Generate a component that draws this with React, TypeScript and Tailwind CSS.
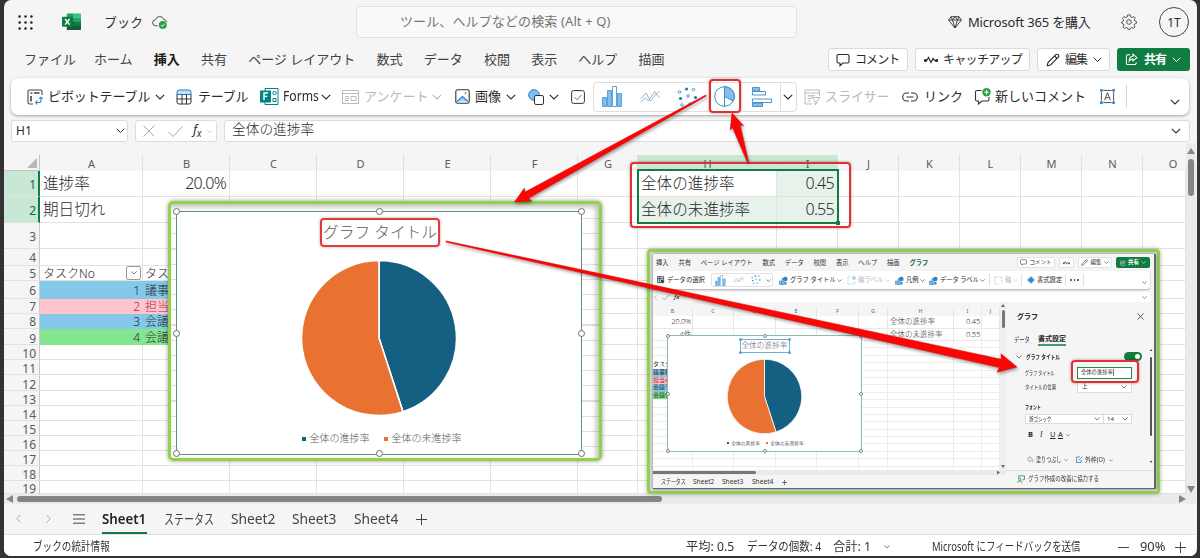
import React from 'react';
import clsx from 'clsx';

const COLS = ['A', 'B', 'C', 'D', 'E', 'F', 'G', 'H', 'I', 'J', 'K', 'L', 'M', 'N', 'O'];
const ROWS = Array.from({ length: 19 }, (_, i) => i + 1);

interface Cell {
  text: string;
  cls?: string;
}

const BIG = 'text-[15.6px] font-light';
const NUM = 'text-[16px] font-light tracking-[-.7px] justify-end pr-[3px] pb-px';
const SMALL = 'text-[12px] font-light pt-px';

const CELLS: Record<string, Cell> = {
  A1: { text: '進捗率', cls: `${BIG} pl-[3px]` },
  B1: { text: '20.0%', cls: NUM },
  A2: { text: '期日切れ', cls: `${BIG} pl-[3px]` },
  H1: { text: '全体の進捗率', cls: `${BIG} pl-[3px]` },
  I1: { text: '0.45', cls: `${NUM} bg-[#e6f2ea]` },
  H2: { text: '全体の未進捗率', cls: `${BIG} pl-[3px] bg-[#e6f2ea]` },
  I2: { text: '0.55', cls: `${NUM} bg-[#e6f2ea]` },
  A5: { text: 'タスクNo', cls: `${SMALL} pl-[3px]` },
  B5: { text: 'タスク', cls: `${SMALL} pl-[2px]` },
  A6: { text: '1', cls: `${SMALL} justify-end pr-[3px] bg-[#84c8ea]` },
  B6: { text: '議事録', cls: `${SMALL} pl-[2px] bg-[#84c8ea]` },
  A7: { text: '2', cls: `${SMALL} justify-end pr-[3px] bg-[#ffc5cf] text-[#b0283c]` },
  B7: { text: '担当者', cls: `${SMALL} pl-[2px] bg-[#ffc5cf] text-[#b0283c]` },
  A8: { text: '3', cls: `${SMALL} justify-end pr-[3px] bg-[#84c8ea]` },
  B8: { text: '会議予', cls: `${SMALL} pl-[2px] bg-[#84c8ea]` },
  A9: { text: '4', cls: `${SMALL} justify-end pr-[3px] bg-[#84e591]` },
  B9: { text: '会議休', cls: `${SMALL} pl-[2px] bg-[#84e591]` },
};

const Chev: React.FC<{ className?: string }> = ({ className = 'w-[10px]' }) => (
  <svg viewBox="0 0 10 6" className={clsx('shrink-0', className)} fill="none" stroke="currentColor" strokeWidth="1.1">
    <path d="M.8.8 5 5 9.2.8" />
  </svg>
);

// 45 / 55 split, starting at twelve o'clock
const PieSlices: React.FC<{ className?: string }> = ({ className }) => (
  <svg viewBox="0 0 156 156" className={className} stroke="#fff" strokeWidth="1.6">
    <path d="M78 78V.5A77.5 77.5 0 0 1 101.95 151.7Z" fill="#156082" />
    <path d="M78 78 101.95 151.7A77.5 77.5 0 1 1 78 .5Z" fill="#e97132" />
  </svg>
);

const BarIcon: React.FC<{ className?: string }> = ({ className }) => (
  <svg viewBox="0 0 21 21" className={className} stroke="#4c9ad6" fill="#83beec" strokeWidth=".9">
    <path d="M.5 11.5h4v9h-4z" />
    <path d="M5.5 4.5h4v16h-4z" />
    <path d="M10.5.5h4v20h-4z" fill="#fff" />
    <path d="M15.5 7.5h4v13h-4z" />
  </svg>
);

const LineIcon: React.FC<{ className?: string }> = ({ className }) => (
  <svg viewBox="0 0 20 12" className={className} fill="none">
    <path d="M.5 8 6 2l4.5 8L15 4l4.5-3.5" stroke="#9a9a9a" strokeWidth=".8" />
    <path d="m.5 11 5-4 3 3 6-9.5L19.5 7" stroke="#5ba6dd" strokeWidth=".8" />
  </svg>
);

const ScatterIcon: React.FC<{ className?: string }> = ({ className }) => (
  <svg viewBox="0 0 21 20" className={className} fill="none" stroke="#3a96dd" strokeWidth=".9">
    <circle cx="2.5" cy="5" r="1.3" />
    <circle cx="16.5" cy="2.5" r="1.3" />
    <circle cx="11" cy="9" r="1.3" />
    <circle cx="5" cy="18" r="1.3" />
    <circle cx="13" cy="17" r="1.3" />
    <g fill="#1f78c1" stroke="none">
      <circle cx="9.5" cy="2" r="1.6" />
      <circle cx="3.5" cy="11.5" r="1.6" />
      <circle cx="18.5" cy="10.5" r="1.6" />
    </g>
  </svg>
);

const CommentIcon: React.FC<{ className?: string }> = ({ className }) => (
  <svg viewBox="0 0 14 14" className={className} fill="none" stroke="currentColor" strokeWidth="1.1">
    <path d="M2.5 1.5h9a1.5 1.5 0 0 1 1.5 1.5v5.5a1.5 1.5 0 0 1-1.5 1.5H7L4 12.7V10H2.5A1.5 1.5 0 0 1 1 8.5V3a1.5 1.5 0 0 1 1.5-1.5Z" />
  </svg>
);

const CatchIcon: React.FC<{ className?: string }> = ({ className }) => (
  <svg viewBox="0 0 14 8" className={className} fill="none" stroke="currentColor" strokeWidth="1.2">
    <path d="M1.5 4.5h1.2L4.5 1.5l2.5 5 2-4 1.5 2h2" />
    <circle cx="1.5" cy="4.5" r="1" fill="currentColor" />
    <circle cx="12.5" cy="4.5" r="1" fill="currentColor" />
  </svg>
);

const PencilIcon: React.FC<{ className?: string }> = ({ className }) => (
  <svg viewBox="0 0 14 14" className={className} fill="none" stroke="currentColor" strokeWidth="1.1">
    <path d="M1.2 12.8 2 9.5l7.8-7.8a1.5 1.5 0 0 1 2.5 2.5L4.5 12z" />
    <path d="m8.5 3 2.5 2.5" />
  </svg>
);

const ShareIcon: React.FC<{ className?: string }> = ({ className }) => (
  <svg viewBox="0 0 14 14" className={className} fill="none" stroke="currentColor" strokeWidth="1.1">
    <path d="M5.5 2H3a1.5 1.5 0 0 0-1.5 1.5V11A1.5 1.5 0 0 0 3 12.5h7.5A1.5 1.5 0 0 0 12 11v-1" />
    <path d="M8.5 1.2 12.8 5 8.5 8.5V6.5c-2 0-3 .7-4 2.3 0-3 1.5-5 4-5.3z" />
  </svg>
);

// blue chart glyph used by the chart element commands
const ElementIcon: React.FC<{ className?: string }> = ({ className }) => (
  <svg viewBox="0 0 9 9" className={className}>
    <path d="M.5 5h2v3.5h-2zM3 2.5h2.2v6H3z" fill="#8cc5ee" stroke="#2f80c4" strokeWidth=".6" />
    <circle cx="6.3" cy="3" r="2.3" fill="#2f80c4" />
    <path d="M5.5 6h2v2.5h-2z" fill="#2f80c4" />
  </svg>
);

const BucketIcon: React.FC<{ className?: string }> = ({ className }) => (
  <svg viewBox="0 0 9 9" className={className}>
    <path d="M3.5 1 7 4.3 4 7.3.8 4.2z" fill="none" stroke="#444" strokeWidth=".7" />
    <path d="M7.5 5.5c1 1.5.6 2.2 0 2.2s-1-.7 0-2.2z" fill="#2f80c4" />
  </svg>
);

interface ArrowProps {
  from: [number, number];
  to: [number, number];
  tail: number;
  neck: number;
  head: number;
  length: number;
}

const Arrow: React.FC<ArrowProps> = ({ from, to, tail, neck, head, length }) => {
  const dx = to[0] - from[0];
  const dy = to[1] - from[1];
  const len = Math.hypot(dx, dy);
  const ux = dx / len;
  const uy = dy / len;
  const at = (along: number, side: number) =>
    `${(from[0] + ux * along - uy * side).toFixed(1)},${(from[1] + uy * along + ux * side).toFixed(1)}`;
  const points = [
    at(0, -tail), at(len - length, -neck), at(len - length - 1.5, -head), at(len, 0),
    at(len - length - 1.5, head), at(len - length, neck), at(0, tail),
  ].join(' ');
  return <polygon points={points} fill="#fb0505" stroke="#d80000" strokeWidth=".5" />;
};

const Handle: React.FC<{ className: string }> = ({ className }) => (
  <i className={clsx('absolute size-[7px] rounded-full border-[1.5px] border-[#6e6e6e] bg-white', className)} />
);

const TinyHandle: React.FC<{ className: string }> = ({ className }) => (
  <i className={clsx('absolute size-[4px] rounded-full border border-[#7a8a84] bg-white', className)} />
);

const TitleBar: React.FC = () => (
  <header className="flex h-[44px] shrink-0 items-center">
    <svg viewBox="0 0 15 15" className="ml-[14px] w-[15px]" fill="#222">
      {[1.6, 7.5, 13.4].map((y) => [1.6, 7.5, 13.4].map((x) => <circle key={`${x}-${y}`} cx={x} cy={y} r="1.25" />))}
    </svg>
    <svg viewBox="0 0 20 18" className="ml-[29px] w-[19px]">
      <path d="M5 1.5A1 1 0 0 1 6 .5h6.5V5H5z" fill="#21a366" />
      <path d="M12.5.5H19a1 1 0 0 1 1 1V5h-7.5z" fill="#33c481" />
      <path d="M5 5h7.5v4.5H5z" fill="#107c41" />
      <path d="M12.5 5H20v4.5h-7.5z" fill="#21a366" />
      <path d="M5 9.5h15V17a1 1 0 0 1-1 1H6a1 1 0 0 1-1-1z" fill="#185c37" />
      <path d="M12.5 9.5H20v4.2h-7.5z" fill="#107c41" />
      <rect y="4" width="11.5" height="10.5" rx="1" fill="#107c41" />
      <path d="m3.3 6.3 4.7 6M8 6.3l-4.7 6" stroke="#fff" strokeWidth="1.5" />
    </svg>
    <span className="ml-[23px] w-[48px] pt-px text-[13px]">ブック</span>
    <svg viewBox="0 0 17 15" className="w-[16px]" fill="none" stroke="#444">
      <path d="M6 11.5H4a3.2 3.2 0 0 1-.3-6.4A4.6 4.6 0 0 1 12.6 5c1.5 0 3 1 3.2 2.6" />
      <circle cx="11.5" cy="10.5" r="4.2" fill="#2e9f48" stroke="none" />
      <path d="m9.5 10.6 1.5 1.5 2.6-2.8" stroke="#fff" />
    </svg>
    <div className="ml-[188px] flex h-[32px] w-[441px] items-center rounded-[4px] border border-[#e2e2e2] bg-[#f9f9f9] pl-[43px] text-[13px] tracking-[.12px] text-[#747474]">
      ツール、ヘルプなどの検索 (Alt + Q)
    </div>
    <svg viewBox="0 0 14 13" className="ml-[151px] w-[14px]" fill="none" stroke="#333" strokeWidth=".9">
      <path d="M3 .7h8L13.4 4 7 12 .6 4zM.6 4h12.8M3 .7 4.5 4 7 12 9.5 4 11 .7M7 .7 4.5 4M7 .7 9.5 4" />
    </svg>
    <span className="ml-[6px] w-[140px] pt-px text-[13px] tracking-[-.18px] whitespace-nowrap">Microsoft 365 を購入</span>
    <svg viewBox="0 0 16 16" className="ml-[13px] w-[16px]" fill="none" stroke="#444" strokeWidth=".9">
      <circle cx="8" cy="8" r="2.3" />
      <path d="m6.7.9-.4 2-1.5.7-1.9-1.1L1.300 4.400l1.300 1.500L2.100 7.400.6 8v1.300l1.800.7.5 1.200-1 1.800 1.500 1.400 1.800-.9 1.300.5.6 1.500h1.800l.6-1.500 1.300-.5 1.800.9 1.500-1.400-1-1.800.5-1.200 1.800-.7V7.500L13.800 7l-.5-1.300 1-1.700-1.400-1.500-1.700 1-1.500-.6-.5-2z" />
    </svg>
    <div className="ml-[22px] flex size-[30px] items-center justify-center rounded-full border border-[#444] pt-px text-[12px]">1T</div>
  </header>
);

const TABS = ['ホーム', '挿入', '共有', 'ページ レイアウト', '数式', 'データ', '校閲', '表示', 'ヘルプ', '描画'];
const CMD = 'flex h-[23px] items-center rounded-[3px] border border-[#dadada] bg-white text-[12px] whitespace-nowrap';

const TabStrip: React.FC = () => (
  <nav className="flex h-[34px] shrink-0 items-start pl-[20px] text-[13px] leading-[20px] text-[#424242]">
    <span className="w-[70px] pt-[5px]">ファイル</span>
    <ul className="flex gap-[21.2px] pt-[5px]">
      {TABS.map((tab) => (
        <li key={tab} className={clsx('whitespace-nowrap', tab === '挿入' && 'font-bold text-[#1b1b1b]')}>{tab}</li>
      ))}
    </ul>
    <div className="ml-auto flex gap-[7px] pt-[4px] pr-[6px] text-[#2b2b2b]">
      <div className={`${CMD} w-[80px] pl-[7px]`}><CommentIcon className="mr-[5px] w-[14px]" /><span className="tracking-[-.9px]">コメント</span></div>
      <div className={`${CMD} w-[115px] pl-[8px]`}><CatchIcon className="mr-[5px] w-[14px]" /><span className="tracking-[-.7px]">キャッチアップ</span></div>
      <div className={`${CMD} w-[73px] pl-[8px]`}><PencilIcon className="mr-[5px] w-[14px]" /><span className="tracking-[-.9px]">編集</span><Chev className="ml-[6px] w-[9px]" /></div>
      <div className="flex h-[23px] w-[73px] items-center rounded-[3px] bg-[#107c41] pl-[8px] text-[12px] font-bold text-white">
        <ShareIcon className="mr-[6px] w-[13px]" /><span className="tracking-[-.9px]">共有</span><Chev className="ml-[6px] w-[9px]" />
      </div>
    </div>
  </nav>
);

const Ribbon: React.FC = () => (
  <div className="mx-[7px] flex h-[37px] shrink-0 items-center rounded-[7px] bg-white pl-[16px] text-[13px] whitespace-nowrap text-[#2b2b2b] shadow-[0_1px_3px_rgba(0,0,0,.35)]">
    <div className="flex w-[149px] items-center">
      <svg viewBox="0 0 16 16" className="mr-[5px] w-[16px]" fill="none" stroke="#444" strokeWidth="1.1">
        <path d="M15 6V2.5A1.5 1.5 0 0 0 13.5 1h-11A1.5 1.5 0 0 0 1 2.5v11A1.5 1.5 0 0 0 2.5 15H6" />
        <path d="M3.5 4h2M7 4h5.5M4 7v5.5" strokeWidth="1.6" />
        <path d="M8.5 13.5h3.5a2 2 0 0 0 2-2V8M8.5 13.5l1.8-1.8M8.5 13.5l1.8 1.8M14 8l-1.8 1.8M14 8l1.5 1.8" stroke="#2b88d8" />
      </svg>
      <span className="w-[107px] tracking-[-.1px]">ピボットテーブル</span><Chev />
    </div>
    <div className="flex w-[84px] items-center">
      <svg viewBox="0 0 16 16" className="mr-[6px] w-[16px]" fill="none" stroke="#333">
        <path d="M1 3A2 2 0 0 1 3 1h10a2 2 0 0 1 2 2v2.5H1z" fill="#bfe0f7" stroke="#2b7cc0" />
        <path d="M1 5.5V13a2 2 0 0 0 2 2h10a2 2 0 0 0 2-2V5.5M1 10h14M6 5.5V15M10.5 5.5V15" />
      </svg>
      <span className="tracking-[-.2px]">テーブル</span>
    </div>
    <div className="flex w-[82px] items-center">
      <svg viewBox="0 0 19 17" className="mr-[4px] w-[19px]">
        <path d="M5 .5h13v16H5z" fill="#fff" stroke="#038387" />
        <rect y="2.5" width="11" height="12" fill="#038387" />
        <path d="M4 12V5h4M4 8.4h3.4" stroke="#fff" strokeWidth="1.4" fill="none" />
        <circle cx="14.5" cy="5" r="1.7" fill="none" stroke="#038387" />
        <path d="M13 10.5h3v3h-3z" fill="none" stroke="#038387" />
      </svg>
      <span className="w-[38px]"><span className="inline-block origin-left scale-x-[.9] text-[13.5px]">Forms</span></span><Chev />
    </div>
    <div className="flex w-[113px] items-center text-[#b9b9b9]">
      <svg viewBox="0 0 17 14" className="mr-[5px] w-[17px]" fill="none" stroke="currentColor">
        <path d="M.5.5h16v13H.5zM.5 3.5h16M3 6.5h4M3 8.5h4M3 10.5h4M9 6.5h5v4H9z" />
      </svg>
      <span className="w-[68px]">アンケート</span><Chev />
    </div>
    <div className="flex w-[73px] items-center">
      <svg viewBox="0 0 15 15" className="mr-[5px] w-[15px]" fill="none" stroke="#333" strokeWidth="1.1">
        <path d="m2 12.5 5.5-5 5.5 5" fill="#9fd0f3" stroke="#2b7cc0" />
        <rect x=".8" y=".8" width="13.4" height="13.4" rx="1.8" />
        <circle cx="10.5" cy="4.2" r="1" fill="#e07b20" stroke="none" />
      </svg>
      <span className="w-[31px]">画像</span><Chev />
    </div>
    <div className="flex w-[43px] items-center">
      <svg viewBox="0 0 16 16" className="mr-[5px] w-[16px]" stroke="#333">
        <circle cx="6" cy="6" r="5.3" fill="#83beec" stroke="#2b7cc0" />
        <rect x="6.5" y="6.5" width="9" height="9" rx="1.5" fill="#fff" />
      </svg>
      <Chev />
    </div>
    <svg viewBox="0 0 14 14" className="mr-[8px] w-[14px]" fill="none" stroke="#333">
      <rect x=".6" y=".6" width="12.8" height="12.8" rx="2" /><path d="M3.5 7.3 6 9.8l4.5-5" stroke="#2e9f48" />
    </svg>
    <div className="flex h-[30px] w-[204px] items-center rounded-[4px] border border-[#dedede] pl-[8px]">
      <BarIcon className="mr-[17px] w-[21px]" />
      <LineIcon className="mr-[17px] w-[20px]" />
      <ScatterIcon className="mr-[16px] w-[21px]" />
      <svg viewBox="0 0 21 21" className="mr-[17px] w-[21px]" fill="none" stroke="#3a8bcb">
        <circle cx="10.5" cy="10.5" r="9.8" />
        <path d="M10.5 10.5V.7a9.8 9.8 0 0 1 8.8 14.2z" fill="#83beec" /><path d="M10.5 10.5v9.8" />
      </svg>
      <svg viewBox="0 0 20 20" className="w-[20px]" fill="#83beec" stroke="#3a8bcb" strokeWidth=".9">
        <path d="M.5 12h19v3.5H.5z" fill="#fff" />
        <path d="M.5.5h7V4h-7z" /><path d="M.5 4.5h13V8H.5z" fill="#fff" /><path d="M.5 16h10v3.5H.5z" />
      </svg>
      <div className="ml-[8px] flex h-full items-center border-l border-[#dedede] pl-[2px]"><Chev /></div>
    </div>
    <div className="ml-[7px] flex w-[98px] items-center text-[#b9b9b9]">
      <svg viewBox="0 0 17 16" className="mr-[4px] w-[17px]" fill="none" stroke="currentColor">
        <path d="M15.5 7V1H1v14h7M1 4h14.5M3.5 7h6M3.5 9.5h4M3.5 12h3" />
        <path d="M8 8.5h8l-3 3.5v2.5l-2 1V12z" /><path d="M4 6.5h7" stroke="#9fd0f3" />
      </svg>
      <span className="tracking-[-.1px]">スライサー</span>
    </div>
    <div className="flex w-[72px] items-center">
      <svg viewBox="0 0 16 10" className="mr-[6px] w-[16px]" fill="none" stroke="#333" strokeWidth="1.1">
        <path d="M7 1H4.7a4 4 0 0 0 0 8H7M9 1h2.3a4 4 0 0 1 0 8H9M4.5 5h7" />
      </svg>
      リンク
    </div>
    <div className="flex w-[126px] items-center">
      <svg viewBox="0 0 17 17" className="mr-[4px] w-[17px]" fill="none" stroke="#333" strokeWidth="1.1">
        <path d="M7.5 2.5H3A1.5 1.5 0 0 0 1.5 4v7.5A1.5 1.5 0 0 0 3 13h1.5v3L8 13h5.5a1.5 1.5 0 0 0 1.5-1.5V9" />
        <circle cx="12.5" cy="4.2" r="4.2" fill="#2e9f48" stroke="none" /><path d="M12.5 2v4.4M10.3 4.2h4.4" stroke="#fff" />
      </svg>
      新しいコメント
    </div>
    <svg viewBox="0 0 16 16" className="w-[15px]" fill="none" stroke="#444">
      <path d="M3.5 1.5h9M3.5 14.5h9M1.5 3.5v9M14.5 3.5v9M4.8 12 8 4l3.2 8M6 9.3h4" />
      <path d="M.1.1h2.800v2.800H.1zM13.100.1h2.800v2.800h-2.800zM.1 13.100h2.800v2.800H.1zM13.100 13.100h2.800v2.800h-2.800z" fill="#2b88d8" stroke="none" />
    </svg>
    <i className="ml-[11px] h-[23px] w-px bg-[#d5d5d5]" />
    <Chev className="mt-[11px] ml-[43px] w-[10px]" />
  </div>
);

const FormulaBar: React.FC = () => (
  <div className="mr-[6px] mb-[13px] ml-[7px] mt-[5px] flex h-[22px] shrink-0 gap-[7px]">
    <div className="flex w-[117px] items-center justify-between rounded-[3px] border border-[#dcdcdc] bg-white pr-[2px] pl-[4px] text-[12px]">
      H1<Chev className="w-[9px]" />
    </div>
    <div className="flex w-[82px] items-center rounded-[3px] border border-[#dcdcdc] bg-white pl-[7px] text-[#a8a8a8]">
      <svg viewBox="0 0 12 12" className="w-[12px]" stroke="currentColor"><path d="m.5.5 11 11M11.5.5l-11 11" /></svg>
      <svg viewBox="0 0 15 11" className="ml-[13px] w-[15px]" fill="none" stroke="currentColor"><path d="m.5 6 4.5 4.500L14.500.5" /></svg>
      <span className="-mt-[2px] ml-[10px] w-[14px] text-[13px] tracking-[-.5px] text-[#333] italic">f<sub className="text-[10px]">x</sub></span>
      <Chev className="w-[5px]" />
    </div>
    <div className="flex flex-1 items-center justify-between rounded-[3px] border border-[#dcdcdc] bg-white pr-[8px] pl-[7px] text-[13.7px] font-light">
      <span className="-mt-[3px]">全体の進捗率</span><Chev />
    </div>
  </div>
);

const Grid: React.FC = () => (
  <div className="flex h-[339px] shrink-0">
    <div className="grid h-[339px] w-[1182px] shrink-0 grid-cols-[36px_103px_87px_87px_87px_87px_87px_60px_139px_61px_61px_61px_61px_61px_61px_43px] grid-rows-[16px_26px_26px_26px_17px_15px_18px_15px_15px_16px_15px_15px_16px_15px_15px_15px_15px_15px_15px_13px] overflow-hidden bg-white">
      <div className="flex items-end justify-end border-r border-b border-[#c4c4c4] bg-[#f5f5f5] p-[2px]">
        <i className="size-[10px] bg-[#b8b8b8] [clip-path:polygon(100%_0,100%_100%,0_100%)]" />
      </div>
      {COLS.map((c) => (
        <div
          key={c}
          className={clsx(
            'flex items-center justify-center text-[11px] leading-none text-[#5a5a5a]',
            c === 'H' || c === 'I' ? 'bg-[#c8e8d5] text-[#0e5c31]' : 'bg-[#f5f5f5]',
            c === 'O' ? 'pl-[17px]' : 'border-r border-[#e0e0e0] pl-px',
          )}
        >
          {c}
        </div>
      ))}
      {ROWS.map((r) => (
        <React.Fragment key={r}>
          <div
            className={clsx(
              'flex items-center justify-end border-b border-[#e2e2e2] text-[12px] leading-none',
              r < 3 ? 'border-r-2 border-r-[#107c41] bg-[#c8e8d5] pr-[2px] text-[#0e6b39]' : 'border-r border-r-[#c9c9c9] bg-[#f5f5f5] pr-[3px] text-[#5a5a5a]',
              r < 9 ? 'pt-[2px]' : 'pt-[4px]',
            )}
          >
            {r}
          </div>
          {COLS.map((c) => {
            const cell = CELLS[`${c}${r}`];
            return (
              <div
                key={c}
                className={clsx(
                  'relative flex items-center overflow-hidden leading-none whitespace-nowrap',
                  r > 5 && r < 10 && c < 'C' ? '' : 'border-r border-b border-[#e2e2e2]',
                  cell?.cls,
                )}
              >
                {cell?.text}
                {c === 'A' && r === 5 && (
                  <span className="absolute right-px bottom-0 flex h-[14px] w-[15px] items-center justify-center rounded-[2px] border border-[#9a9a9a] bg-white">
                    <Chev className="w-[6px]" />
                  </span>
                )}
              </div>
            );
          })}
        </React.Fragment>
      ))}
    </div>
    <div className="-mt-[12px] flex h-[351px] w-[10px] flex-col items-center bg-[#ebebeb] pt-[5px] pb-px">
      <i className="h-[6px] w-[8px] bg-[#858585] [clip-path:polygon(50%_0,100%_100%,0_100%)]" />
      <i className="mt-[5px] h-[37px] w-[6px] rounded-full bg-[#858585]" />
      <i className="mt-auto h-[7px] w-[8px] bg-[#858585] [clip-path:polygon(0_0,100%_0,50%_100%)]" />
    </div>
  </div>
);

const SheetTabs: React.FC = () => (
  <>
    <div className="flex h-[10px] shrink-0 items-center bg-[#ebebeb] px-[2px]">
      <i className="h-[8px] w-[7px] bg-[#858585] [clip-path:polygon(0_50%,100%_0,100%_100%)]" />
      <i className="ml-[4px] h-[6px] w-[645px] rounded-full bg-[#858585]" />
      <i className="mr-[8px] ml-auto h-[8px] w-[7px] bg-[#858585] [clip-path:polygon(100%_50%,0_0,0_100%)]" />
    </div>
    <div className="flex h-[31px] shrink-0 items-center border-b border-[#e0e0e0] text-[13.5px] whitespace-nowrap text-[#444]">
      <Chev className="ml-[10px] w-[9px] rotate-90 text-[#aaa]" />
      <Chev className="ml-[21px] w-[9px] -rotate-90 text-[#aaa]" />
      <svg viewBox="0 0 12 10" className="ml-[20px] w-[12px]" stroke="#444"><path d="M0 .8h12M0 5h12M0 9.2h12" /></svg>
      <span className="relative ml-[17px] flex h-full w-[62px] items-center font-semibold text-[#222]">
        <span className="inline-block origin-left scale-x-[.98]">Sheet1</span>
        <i className="absolute bottom-0 left-0 h-[2px] w-[45px] bg-[#107c41]" />
      </span>
      <span className="w-[67px]"><span className="inline-block origin-left scale-x-[.74]">ステータス</span></span>
      <span className="w-[61px]"><span className="inline-block origin-left scale-x-[1.02]">Sheet2</span></span>
      <span className="w-[62px]"><span className="inline-block origin-left scale-x-[1.02]">Sheet3</span></span>
      <span className="w-[62px]"><span className="inline-block origin-left scale-x-[1.02]">Sheet4</span></span>
      <svg viewBox="0 0 11 11" className="w-[11px]" stroke="#444"><path d="M5.5 0v11M0 5.5h11" /></svg>
    </div>
  </>
);

const StatusBar: React.FC = () => (
  <footer className="flex h-[21px] shrink-0 items-center bg-white pt-[3px] text-[12px] leading-none whitespace-nowrap text-[#333]">
    <span className="ml-[29px] w-[653px]"><span className="inline-block origin-left scale-x-[.8]">ブックの統計情報</span></span>
    <span className="w-[61px]"><span className="inline-block origin-left scale-x-[1.02]">平均: 0.5</span></span>
    <span className="w-[86px]"><span className="inline-block origin-left scale-x-[.87]">データの個数: 4</span></span>
    <span className="w-[51px]"><span className="inline-block origin-left scale-x-[1.02]">合計: 1</span></span>
    <Chev className="w-[6px]" />
    <span className="ml-[42px] w-[186px]"><span className="inline-block origin-left scale-x-[.79]">Microsoft にフィードバックを送信</span></span>
    <i className="h-px w-[11px] bg-[#444]" />
    <span className="ml-[11px] w-[35px]"><span className="inline-block origin-left scale-x-[1.07]">90%</span></span>
    <svg viewBox="0 0 11 11" className="w-[11px]" stroke="#444"><path d="M5.5 0v11M0 5.5h11" /></svg>
  </footer>
);

const Chart: React.FC = () => (
  <div className="absolute top-[201px] left-[168px] h-[260px] w-[434px] rounded-[5px] border-[3px] border-[#92d050] bg-[repeating-linear-gradient(#fff_0_14px,#e0e0e0_14px_15.2px)] pt-[7px] pl-[5px] shadow-[0_0_4px_rgba(0,0,0,.4),inset_-3px_3px_5px_rgba(0,0,0,.25)]">
    <div className="relative flex h-[244px] w-[406px] flex-col items-center border border-[#5d8f7b] bg-white text-[#595959]">
      <div className="mt-[6px] ml-[2px] flex h-[29px] w-[120px] items-center justify-center rounded-[4px] border-2 border-[#e23a3a] text-[15.7px] font-light shadow-[0_0_3px_rgba(0,0,0,.35)]">
        グラフ タイトル
      </div>
      <PieSlices className="mt-[13px] w-[156px]" />
      <div className="mt-[15px] ml-[5px] flex items-center text-[10px] leading-[15px] font-light">
        <i className="mr-[4px] size-[4px] bg-[#156082]" /><span className="w-[74px]">全体の進捗率</span>
        <i className="mr-[4px] size-[4px] bg-[#e97132]" /><span>全体の未進捗率</span>
      </div>
      <Handle className="-top-[4px] -left-[4px]" />
      <Handle className="-top-[4px] left-[199px]" />
      <Handle className="-top-[4px] -right-[4px]" />
      <Handle className="top-[118px] -left-[4px]" />
      <Handle className="top-[118px] -right-[4px]" />
      <Handle className="-bottom-[3px] -left-[4px]" />
      <Handle className="-bottom-[3px] left-[199px]" />
      <Handle className="-right-[4px] -bottom-[3px]" />
    </div>
  </div>
);

const MINI_TABS = ['挿入', '共有', 'ページ レイアウト', '数式', 'データ', '校閲', '表示', 'ヘルプ', '描画', 'グラフ'];
const MINI_BTN = 'flex h-[11px] items-center justify-center gap-[2px] rounded-[2px] border border-[#e2e2e2] bg-white';
const MINI_TASKS = [
  { text: '議事録', cls: 'bg-[#84c8ea]' },
  { text: '担当者', cls: 'bg-[#ffc5cf] text-[#b0283c]' },
  { text: '会議予', cls: 'bg-[#84c8ea]' },
  { text: '会議休', cls: 'bg-[#84e591]' },
];

const MiniRibbon: React.FC = () => (
  <>
    <div className="flex h-[17px] shrink-0 items-center pr-[4px] pl-[3px] text-[6.3px]">
      <div className="flex gap-[9.8px] text-[#333]">
        {MINI_TABS.map((t) => <span key={t} className={clsx(t === 'グラフ' && 'font-bold text-[#0e7039]')}>{t}</span>)}
      </div>
      <div className="ml-auto flex gap-[4px]">
        <div className={`${MINI_BTN} w-[38px] text-[5.5px]`}><CommentIcon className="w-[7px]" />コメント</div>
        <div className={`${MINI_BTN} w-[15px]`}><CatchIcon className="w-[7px]" /></div>
        <div className={`${MINI_BTN} w-[34px] text-[5.5px]`}><PencilIcon className="w-[7px]" />編集<Chev className="w-[5px]" /></div>
        <div className="flex h-[11px] w-[34px] items-center justify-center gap-[2px] rounded-[2px] bg-[#107c41] text-[5.5px] font-bold text-white">
          <ShareIcon className="w-[6px]" />共有<Chev className="w-[5px]" />
        </div>
      </div>
    </div>
    <div className="mr-[4px] flex h-[18px] shrink-0 items-center rounded-r-[3px] bg-white pl-[4px] text-[6.3px] text-[#222] shadow-[0_1px_2px_rgba(0,0,0,.3)]">
      <svg viewBox="0 0 9 9" className="mr-[2px] w-[8px]"><path d="M.5.5h7v7h-7zM.5 3h7M3 .5v7" fill="#bcdcf5" stroke="#333" strokeWidth=".8" /><path d="m4 4 4.5 2-2 .5-.5 2z" fill="#111" /></svg>
      <span className="w-[44px]">データの選択</span>
      <div className="flex h-[14px] w-[62px] items-center rounded-[2px] border border-[#e2e2e2] pl-[3px]">
        <BarIcon className="mr-[8px] w-[11px]" /><LineIcon className="mr-[7px] w-[10px]" /><ScatterIcon className="mr-[5px] w-[10px]" /><Chev className="w-[5px]" />
      </div>
      <ElementIcon className="mr-[2px] ml-[6px] w-[9px]" /><span className="w-[47px]">グラフ タイトル</span><Chev className="w-[5px]" />
      <span className="ml-[5px] flex w-[48px] items-center text-[#b5b5b5]">
        <svg viewBox="0 0 9 9" className="mr-[2px] w-[9px]" fill="none" stroke="#9cc8e8" strokeWidth=".8"><path d="M1 1v7h7V5M1 1h3" strokeDasharray="1.5 1" /><circle cx="7" cy="2" r="1.5" fill="#bcdcf5" /></svg>
        <span className="w-[27px]">軸ラベル</span><Chev className="w-[5px]" />
      </span>
      <ElementIcon className="mr-[2px] w-[9px]" /><span className="w-[14px]">凡例</span><Chev className="w-[5px]" />
      <ElementIcon className="mr-[2px] ml-[4px] w-[9px]" /><span className="w-[40px] tracking-[-.1px]">データ ラベル</span><Chev className="w-[5px]" />
      <span className="ml-[4px] flex h-[12px] w-[33px] items-center border-x border-[#e0e0e0] pl-[4px] text-[#b5b5b5]">
        <svg viewBox="0 0 9 9" className="mr-[2px] w-[9px]" fill="none" stroke="#9cc8e8" strokeWidth=".8"><path d="M1 1h7v5M1 1v7h4" strokeDasharray="1.5 1" /></svg>
        軸<Chev className="ml-[2px] w-[5px]" />
      </span>
      <svg viewBox="0 0 9 9" className="mr-[2px] ml-[5px] w-[8px]"><path d="M4.5 0 9 4.5 4.5 9 0 4.5z" fill="#5ba6dd" /><path d="M4.5 2.5v4M2.5 4.5h4" stroke="#155a96" strokeWidth=".8" /></svg>
      <span className="w-[28px] whitespace-nowrap">書式設定</span>
      <span className="flex h-[12px] w-[19px] items-center justify-center gap-[2px] border-x border-[#e0e0e0]">
        <i className="size-[1.5px] rounded-full bg-[#333]" /><i className="size-[1.5px] rounded-full bg-[#333]" /><i className="size-[1.5px] rounded-full bg-[#333]" />
      </span>
      <Chev className="mt-[5px] mr-[3px] ml-auto w-[5px]" />
    </div>
    <div className="mt-[3px] mr-[4px] flex h-[10px] shrink-0 items-center text-[#9a9a9a]">
      <Chev className="w-[5px] rotate-90" />
      <svg viewBox="0 0 9 7" className="ml-[4px] w-[8px]" fill="none" stroke="currentColor"><path d="m.5 4 2.5 2.5L8.5.5" /></svg>
      <span className="ml-[4px] w-[11px] text-[6px] font-bold text-[#555] italic">fx</span>
      <div className="flex h-full flex-1 items-center justify-end rounded-[2px] bg-white pr-[3px] text-[#333]"><Chev className="w-[5px]" /></div>
    </div>
  </>
);

const MiniChart: React.FC = () => (
  <div className="absolute top-[18px] left-[14px] flex h-[117px] w-[195px] flex-col items-center border border-[#8fbca9] bg-white text-[#666]">
    <div className="relative mt-[3px] flex h-[14px] w-[50px] items-center justify-center border border-[#6aaede] text-[7.7px] font-light">
      全体の進捗率
      <i className="absolute -top-[2px] -left-[2px] size-[3px] rounded-full bg-[#5b9fd4]" />
      <i className="absolute -top-[2px] -right-[2px] size-[3px] rounded-full bg-[#5b9fd4]" />
      <i className="absolute -bottom-[2px] -left-[2px] size-[3px] rounded-full bg-[#5b9fd4]" />
      <i className="absolute -right-[2px] -bottom-[2px] size-[3px] rounded-full bg-[#5b9fd4]" />
    </div>
    <PieSlices className="mt-[6px] w-[75px]" />
    <div className="mt-[5px] ml-[2px] flex items-center text-[4.8px] leading-[8px]">
      <i className="mr-[2px] size-[2px] bg-[#156082]" /><span className="w-[35px]">全体の進捗率</span>
      <i className="mr-[2px] size-[2px] bg-[#e97132]" /><span>全体の未進捗率</span>
    </div>
    <TinyHandle className="-top-[2px] -left-[2px]" />
    <TinyHandle className="-top-[2px] left-[95px]" />
    <TinyHandle className="-top-[2px] -right-[2px]" />
    <TinyHandle className="top-[56px] -left-[2px]" />
    <TinyHandle className="top-[56px] -right-[2px]" />
    <TinyHandle className="-bottom-[2px] -left-[2px]" />
    <TinyHandle className="-bottom-[2px] left-[95px]" />
    <TinyHandle className="-right-[2px] -bottom-[2px]" />
  </div>
);

const MINI_GRID = 'grid grid-cols-[40px_41px_42px_41px_42px_29px_66px_28px_18px]';

const MiniSheet: React.FC = () => (
  <div className="flex h-full w-[353px] shrink-0 flex-col">
    <div className="flex h-[168px] shrink-0">
      <div className="relative flex w-[347px] flex-col overflow-hidden bg-white">
        <div className={`${MINI_GRID} h-[14px] shrink-0 bg-[#f5f5f5] pt-[5px] text-center text-[5.5px] text-[#666]`}>
          {COLS.slice(1, 10).map((c) => <span key={c} className="border-r border-[#e6e6e6] leading-[9px]">{c}</span>)}
        </div>
        {['全体の進捗率', '全体の未進捗率'].map((label, i) => (
          <div key={label} className={`${MINI_GRID} h-[12.5px] shrink-0 text-[7.5px] leading-[11px] font-light text-[#333]`}>
            {COLS.slice(1, 10).map((c) => (
              <span key={c} className={clsx('border-r border-b border-[#e9e9e9] whitespace-nowrap', (c === 'B' || c === 'I') && 'pr-px text-right tracking-[-.2px]', c === 'H' && 'pl-[2px]')}>
                {c === 'B' && (i ? '4件' : '20.0%')}
                {c === 'H' && label}
                {c === 'I' && (i ? '0.55' : '0.45')}
              </span>
            ))}
          </div>
        ))}
        {Array.from({ length: 18 }, (_, i) => (
          <div key={i} className={`${MINI_GRID} h-[7.4px] shrink-0`}>
            {COLS.slice(1, 10).map((c) => <span key={c} className="border-r border-b border-[#ececec]" />)}
          </div>
        ))}
        <div className="absolute top-[59px] left-0 w-[16px] overflow-hidden bg-white text-[6px] leading-[7.4px] whitespace-nowrap">
          <p className="pb-[1px]">タスク</p>
          {MINI_TASKS.map((t) => <p key={t.text} className={clsx('h-[7.4px]', t.cls)}>{t.text}</p>)}
        </div>
        <div className="absolute top-[15px] left-0"><MiniChart /></div>
      </div>
      <div className="flex w-[6px] flex-col items-center bg-[#efefef] py-[2px]">
        <i className="h-[3px] w-[4px] bg-[#666] [clip-path:polygon(50%_0,100%_100%,0_100%)]" />
        <i className="mt-[3px] h-[18px] w-[3px] rounded-full bg-[#777]" />
        <i className="mt-auto h-[3px] w-[4px] bg-[#666] [clip-path:polygon(0_0,100%_0,50%_100%)]" />
      </div>
    </div>
    <div className="flex h-[5px] shrink-0 items-center justify-between bg-[#ebebeb] pr-[6px]">
      <i className="h-[3px] w-[103px] rounded-r-full bg-[#777]" />
      <i className="h-[4px] w-[3px] bg-[#666] [clip-path:polygon(100%_50%,0_0,0_100%)]" />
    </div>
    <div className="flex flex-1 items-center pt-px pl-[8px] text-[6.6px] whitespace-nowrap text-[#333]">
      <span className="w-[32px]"><span className="inline-block origin-left scale-x-[.75]">ステータス</span></span>
      <span className="w-[29px]">Sheet2</span><span className="w-[30px]">Sheet3</span><span className="w-[30px]">Sheet4</span>
      <svg viewBox="0 0 5 5" className="w-[5px]" stroke="#444" strokeWidth=".7"><path d="M2.5 0v5M0 2.5h5" /></svg>
    </div>
  </div>
);

const FormatPane: React.FC = () => (
  <aside className="relative flex flex-1 flex-col pl-[11px] text-[6px] leading-none whitespace-nowrap text-[#333]">
    <div className="mt-[8px] flex h-[14px] items-center justify-between pr-[10px] text-[7px] font-bold text-[#222]">
      グラフ
      <svg viewBox="0 0 7 7" className="w-[7px]" stroke="#333" strokeWidth=".8"><path d="m.5.5 6 6M6.5.5l-6 6" /></svg>
    </div>
    <div className="mt-[7px] flex h-[16px] text-[7px]">
      <span className="-ml-[3px] w-[24px] pt-[5px]"><span className="inline-block origin-left scale-x-[.75]">データ</span></span>
      <span className="border-b-2 border-[#3f9b6c] pt-[4px] font-bold text-[#222]">書式設定</span>
    </div>
    <div className="mt-[5px] flex h-[12px] items-center pr-[12px]">
      <Chev className="ml-[-1px] w-[6px]" />
      <span className="ml-[4px] inline-block origin-left scale-x-[.78] font-bold text-[#222]">グラフ タイトル</span>
      <span className="ml-auto flex h-[9px] w-[18px] items-center justify-end rounded-full bg-[#107c41] pr-[2px]"><i className="size-[5px] rounded-full bg-white" /></span>
    </div>
    <div className="mt-[4px] flex h-[12px] items-center pl-[8px]">
      <span className="w-[52px]"><span className="inline-block origin-left scale-x-[.68]">グラフ タイトル</span></span>
      <span className="flex h-[12px] w-[55px] items-center border border-[#1f8a50] bg-white pl-[3px] text-[5.3px]">全体の進捗率<i className="h-[7px] w-px bg-[#777]" /></span>
    </div>
    <div className="mt-[2px] flex h-[12px] items-center pl-[8px]">
      <span className="w-[52px]"><span className="inline-block origin-left scale-x-[.74]">タイトルの位置</span></span>
      <span className="flex h-[12px] w-[55px] items-center justify-between border border-[#dcdcdc] bg-white px-[4px] pt-px text-[5.5px]">上<Chev className="w-[6px]" /></span>
    </div>
    <p className="mt-[11px] ml-[8px] h-[6px] origin-left scale-x-[.66] font-bold text-[#222]">フォント</p>
    <div className="mt-[4px] flex h-[11px] pl-[8px]">
      <span className="flex w-[79px] items-center justify-between border border-[#dcdcdc] bg-white px-[3px]"><span className="inline-block origin-left scale-x-[.75]">游ゴシック</span><Chev className="w-[6px]" /></span>
      <span className="flex w-[28px] items-center justify-between border border-l-0 border-[#dcdcdc] bg-white px-[3px]">14<Chev className="w-[6px]" /></span>
    </div>
    <div className="mt-[6px] flex h-[10px] items-center pl-[11px] text-[7.5px] text-[#222]">
      <b className="w-[12px]">B</b><span className="w-[10px] font-['Liberation_Serif'] italic">I</span><span className="w-[8px] underline">U</span>
      <span className="border-b border-[#222]">A</span><Chev className="ml-[3px] w-[4px]" />
    </div>
    <div className="mt-[15px] flex h-[10px] items-center pl-[10px] text-[6.5px]">
      <BucketIcon className="mr-[2px] w-[7px]" />
      <span className="w-[28px]"><span className="inline-block origin-left scale-x-[.78]">塗りつぶし</span></span><Chev className="w-[4px]" />
      <svg viewBox="0 0 7 7" className="mr-[2px] ml-[8px] w-[7px]" fill="none" stroke="#2f80c4" strokeWidth=".8"><path d="M4 1H.5v5.5H5V4M2.5 4.5 6.5.5" /></svg>
      <span className="w-[24px]"><span className="inline-block origin-left scale-x-[.9]">外枠(O)</span></span><Chev className="w-[4px]" />
    </div>
    <div className="mt-[5px] -ml-[11px] flex h-[19px] items-center border-t border-[#e0e0e0] pl-[11px] text-[6.5px]">
      <svg viewBox="0 0 9 9" className="mr-[3px] w-[8px]" fill="none" stroke="#107c41" strokeWidth=".8"><path d="M2 3.5V1h6.5v4H7L5.5 6.5" /><circle cx="3" cy="5" r="1.3" /><path d="M.5 8.8C.5 6.5 5.5 6.5 5.5 8.8" /></svg>
      <span className="inline-block origin-left scale-x-[.84]">グラフ作成の改善に協力する</span>
    </div>
    <div className="absolute top-[47px] right-px flex h-[114px] w-[4px] flex-col items-center justify-between">
      <i className="h-[2px] w-[3px] bg-[#444] [clip-path:polygon(50%_0,100%_100%,0_100%)]" />
      <i className="mb-[20px] h-[79px] w-[2px] rounded-full bg-[#555]" />
      <i className="h-[2px] w-[3px] bg-[#444] [clip-path:polygon(0_0,100%_0,50%_100%)]" />
    </div>
  </aside>
);

const Inset: React.FC = () => (
  <div className="absolute top-[249px] left-[647px] h-[245px] w-[513px] rounded-[4px] border-[3px] border-[#92d050] bg-[#d9d9d9] pt-[2px] pl-[3px] shadow-[0_0_4px_rgba(0,0,0,.35)]">
    <div className="flex h-[235px] w-[503px] flex-col overflow-hidden border-r-2 border-b border-[#666] bg-[#f5f5f5] shadow-[0_0_3px_rgba(0,0,0,.4)]">
      <MiniRibbon />
      <div className="flex min-h-0 flex-1">
        <MiniSheet />
        <FormatPane />
      </div>
    </div>
  </div>
);

const RED = 'absolute rounded-[4px] border-2 border-[#e23030] shadow-[0_0_3px_rgba(0,0,0,.4)]';

export default function App() {
  return (
    <div className="relative h-[558px] w-[1200px] overflow-hidden bg-[#333] px-[4px] font-['Noto_Sans','Noto_Sans_CJK_JP',sans-serif] text-[#2b2b2b]">
      <div className="flex h-[556px] w-[1193px] flex-col overflow-hidden rounded-[7px] bg-[#f5f5f5] pr-px">
        <TitleBar />
        <TabStrip />
        <Ribbon />
        <FormulaBar />
        <Grid />
        <SheetTabs />
        <StatusBar />
      </div>

      {/* selected range */}
      <div className="absolute top-[169px] left-[637px] h-[55px] w-[202px] border-2 border-[#107c41]">
        <i className="absolute -right-[3px] -bottom-[3px] size-[4px] bg-[#107c41]" />
      </div>

      <Chart />
      <Inset />

      {/* annotations */}
      <div className={`${RED} top-[79px] left-[709px] h-[34px] w-[32px]`} />
      <div className={`${RED} top-[162px] left-[630px] h-[66px] w-[221px]`} />
      <div className={`${RED} top-[360px] left-[1071px] h-[23px] w-[68px]`} />
      <svg viewBox="0 0 1200 558" className="pointer-events-none absolute inset-0 h-[558px] w-[1200px] drop-shadow-[1px_2px_1.5px_rgba(0,0,0,.35)]">
        <Arrow from={[706, 95.5]} to={[514.5, 202]} tail={0.6} neck={3.6} head={7.5} length={14} />
        <Arrow from={[748, 162]} to={[732, 113]} tail={0.6} neck={4} head={7} length={14} />
        <Arrow from={[446, 241.5]} to={[1017, 367]} tail={0.6} neck={4.3} head={9.5} length={17} />
      </svg>
    </div>
  );
}
